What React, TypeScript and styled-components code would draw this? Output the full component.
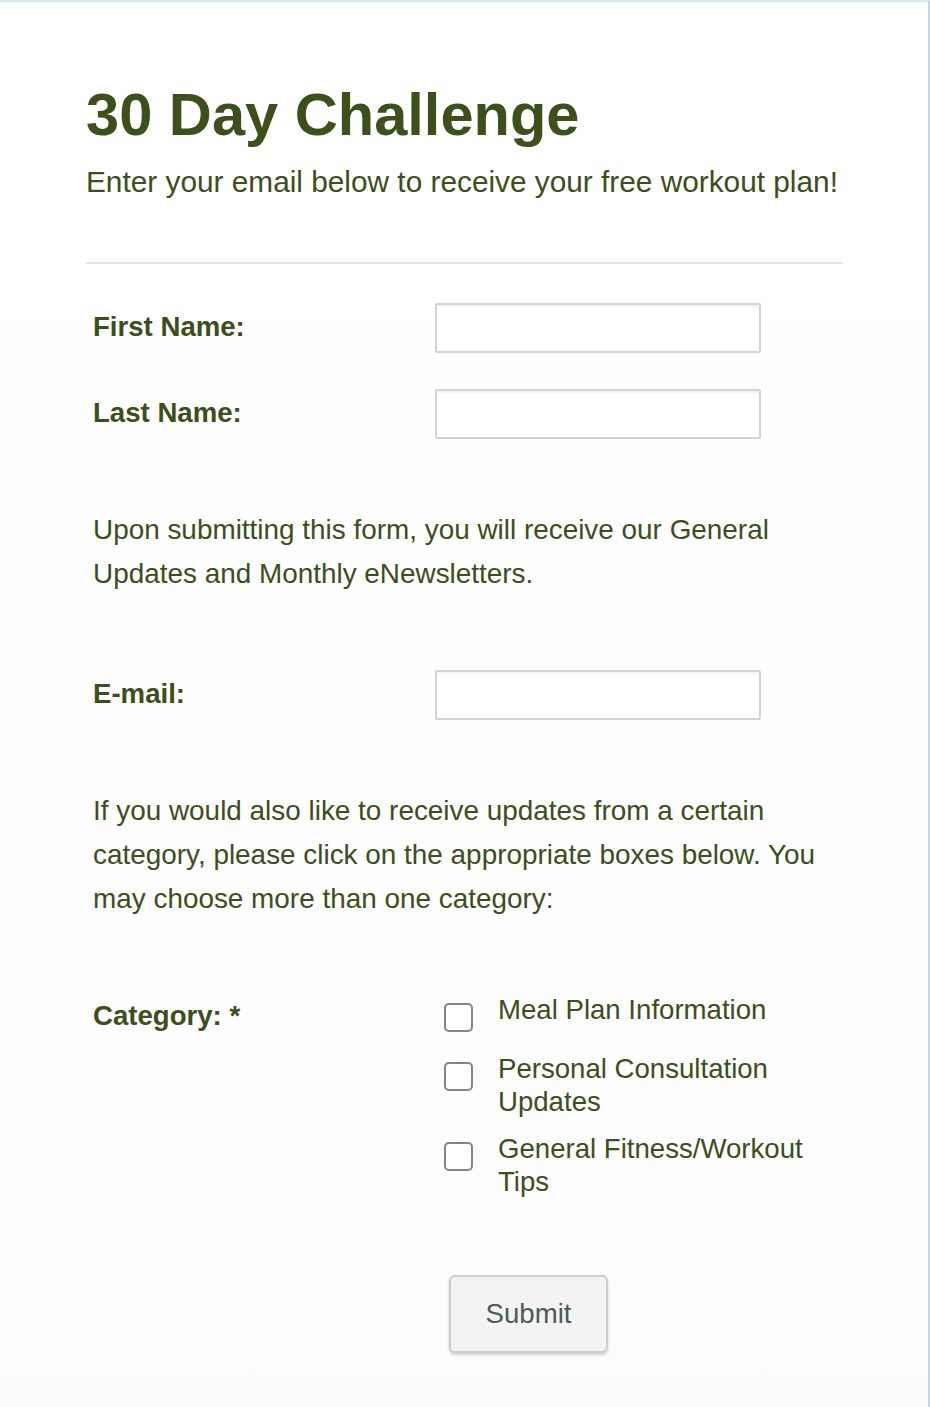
import { FC } from 'react'
import styled, { createGlobalStyle } from 'styled-components'

const GlobalStyle = createGlobalStyle`
  html, body {
    margin: 0;
    padding: 0;
    background: #ffffff;
  }
  body {
    font-family: 'Liberation Sans', Arial, sans-serif;
  }
`

const Page = styled.div`
  box-sizing: border-box;
  width: 930px;
  min-height: 1407px;
  border-top: 2px solid #d8e8f7;
  border-right: 2px solid #c6d6ea;
  background: linear-gradient(#ffffff, #fcfcfc);
  color: #3c4e1b;
`

const Container = styled.div`
  width: 757px;
  padding: 77px 0 0 86px;
`

const Title = styled.h1`
  margin: 0;
  font-size: 59.6px;
  line-height: 72px;
  font-weight: 700;
  color: #3d4f1b;
`

const Subtitle = styled.p`
  margin: 13px 0 0;
  font-size: 29.8px;
  line-height: 36px;
  white-space: nowrap;
`

const Divider = styled.hr`
  margin: 62px 0 0;
  border: 0;
  border-top: 2px solid #e4e4e4;
`

const Form = styled.form`
  padding: 0 0 0 7px;
  font-size: 27.6px;
`

const Row = styled.div<{ $top: number; $align?: 'center' | 'start' }>`
  display: grid;
  grid-template-columns: 342px 1fr;
  align-items: ${props => (props.$align === 'start' ? 'start' : 'center')};
  margin-top: ${props => props.$top}px;
`

const Label = styled.label<{ $offset?: number }>`
  font-weight: 700;
  line-height: 31.7px;
  padding-top: ${props => props.$offset ?? 0}px;
  padding-bottom: ${props => (props.$offset ? 0 : 3)}px;
`

const Input = styled.input`
  box-sizing: border-box;
  width: 326px;
  height: 50px;
  border: 2px solid #d3d3d3;
  border-radius: 2px;
  box-shadow: inset 0 2px 2px rgba(0, 0, 0, 0.05);
  background: #fff;
  font: inherit;
  padding: 0 10px;
`

const Note = styled.p<{ $top: number }>`
  margin: ${props => props.$top}px 0 0;
  font-size: 27.9px;
  line-height: 44px;
`

const Options = styled.div`
  display: flex;
  flex-direction: column;
  gap: 14px;
  padding-left: 9px;
`

const Option = styled.label`
  display: flex;
  align-items: flex-start;
  gap: 25px;
  line-height: 33px;
`

const Box = styled.span`
  flex: none;
  box-sizing: border-box;
  width: 29px;
  height: 29px;
  margin: 10px 0 6px;
  border: 2px solid #858585;
  border-radius: 5px;
  background: #fff;
`

const ButtonRow = styled.div`
  display: grid;
  grid-template-columns: 342px 1fr;
  margin-top: 77px;
  padding-bottom: 50px;
`

const SubmitButton = styled.button`
  grid-column: 2;
  justify-self: start;
  margin-left: 14px;
  width: 159px;
  height: 78px;
  border: 2px solid #cdcdcd;
  border-radius: 6px;
  background: #f3f3f3;
  box-shadow: 0 2px 3px rgba(0, 0, 0, 0.18);
  color: #4c5a58;
  font-family: inherit;
  font-size: 27.6px;
`

const categories = [
  ['Meal Plan Information'],
  ['Personal Consultation', 'Updates'],
  ['General Fitness/Workout', 'Tips'],
]

const App: FC = () => {
  return (
    <Page>
      <GlobalStyle />
      <Container>
        <Title>30 Day Challenge</Title>
        <Subtitle>Enter your email below to receive your free workout plan!</Subtitle>
        <Divider />
        <Form onSubmit={e => e.preventDefault()}>
          <Row $top={39}>
            <Label>First Name:</Label>
            <Input type='text' />
          </Row>
          <Row $top={36}>
            <Label>Last Name:</Label>
            <Input type='text' />
          </Row>
          <Note $top={69}>
            Upon submitting this form, you will receive our General
            <br />
            Updates and Monthly eNewsletters.
          </Note>
          <Row $top={74}>
            <Label>E-mail:</Label>
            <Input type='email' />
          </Row>
          <Note $top={69}>
            If you would also like to receive updates from a certain
            <br />
            category, please click on the appropriate boxes below. You
            <br />
            may choose more than one category:
          </Note>
          <Row $top={72} $align='start'>
            <Label $offset={7}>Category: *</Label>
            <Options>
              {categories.map(lines => (
                <Option key={lines[0]}>
                  <Box />
                  <span>
                    {lines.map((line, i) => (
                      <span key={line}>
                        {i > 0 && <br />}
                        {line}
                      </span>
                    ))}
                  </span>
                </Option>
              ))}
            </Options>
          </Row>
          <ButtonRow>
            <SubmitButton type='submit'>Submit</SubmitButton>
          </ButtonRow>
        </Form>
      </Container>
    </Page>
  )
}

export default App
